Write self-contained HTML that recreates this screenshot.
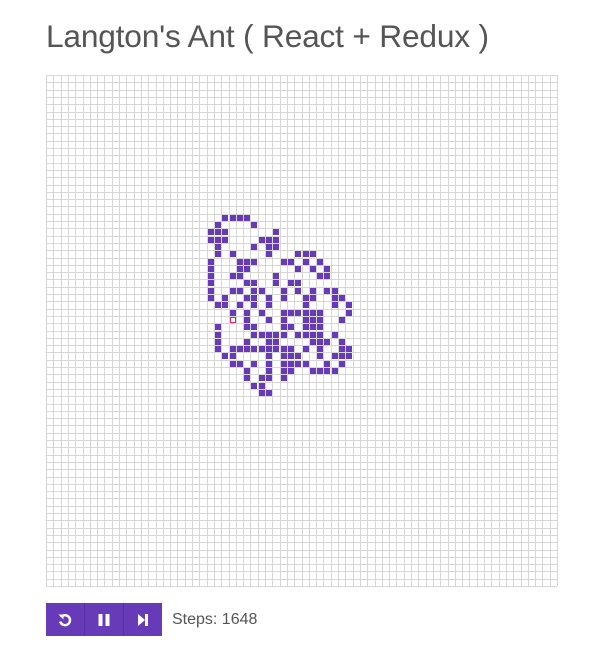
<!DOCTYPE html>
<html><head><meta charset="utf-8"><style>
html,body{margin:0;padding:0;background:#fff;width:600px;height:660px;overflow:hidden}
body{font-family:"Liberation Sans",sans-serif;color:#555}
h1{position:absolute;left:46px;top:16px;margin:0;font-weight:normal;font-size:31.7px;line-height:40px;color:#555;letter-spacing:-0.2px;white-space:nowrap}
#g{position:absolute;left:46px;top:75px}
.btns{position:absolute;left:46px;top:603px;height:33px;display:flex}
.b{width:38px;height:33px;background:#673ab7;border-right:1px solid #5a2ea6;display:flex;align-items:center;justify-content:center}
.b:last-child{border-right:none}
.steps{position:absolute;left:172px;top:611px;font-size:16px;color:#555}
</style></head><body>
<h1>Langton's Ant ( React + Redux )</h1>
<svg id="g" width="512" height="512" xmlns="http://www.w3.org/2000/svg"></svg>
<div class="btns">
<div class="b"><svg width="16" height="16" viewBox="0 0 16 16"><path d="M4 5.2A5 5 0 1 1 3.2 9.5" fill="none" stroke="#fff" stroke-width="2.4"/><path d="M1.5 2.5L6.5 2.5L6.5 7.5Z" fill="#fff"/></svg></div>
<div class="b"><svg width="16" height="16" viewBox="0 0 16 16"><rect x="2.5" y="2" width="4" height="12" fill="#fff"/><rect x="9.5" y="2" width="4" height="12" fill="#fff"/></svg></div>
<div class="b"><svg width="16" height="16" viewBox="0 0 16 16"><path d="M3 2L10 8L3 14Z" fill="#fff"/><rect x="10" y="2" width="3" height="12" fill="#fff"/></svg></div>
</div>
<div class="steps">Steps: 1648</div>
<script>
var rows={1:[2,3,4,5],2:[1,6],3:[0,1,2,9],4:[0,1,2,7,8,9],5:[1,6,8,9],6:[1,3,8,12,13,14],
7:[0,4,5,6,10,11,13,15],8:[0,4,5,12,14,16],9:[0,3,4,9,15,16],10:[0,5,6,9,11,12],
11:[0,3,4,6,7,10,12,14,16,17],12:[0,2,5,6,8,10,13,14,17,18],13:[1,2,4,6,8,13,17,19],
14:[3,5,7,10,11,12,13,14,15,19],15:[5,8,10,13,14,15,18],16:[1,5,6,10,11,13,14,15],
17:[1,6,7,8,9,10,12,13,14,15,17],18:[1,5,8,9,14,15,16,18],19:[1,3,4,5,6,7,8,9,10,11,13,15,18,19],
20:[2,3,8,10,11,12,15,17,18,19],21:[3,4,6,8,10,11,12,13,16,18],22:[5,8,10,11,14,15,16,17],
23:[5,7,8,10],24:[6,7],25:[7,8]};
var P=7.3,N=70,W=511,s='<rect width="512" height="512" fill="#fff"/>';
for(var i=0;i<=N;i++){var v=Math.round(i*P)+0.5;s+='<line x1="'+v+'" y1="0" x2="'+v+'" y2="'+W+'" stroke="#d6d6d6"/><line x1="0" y1="'+v+'" x2="'+W+'" y2="'+v+'" stroke="#d6d6d6"/>';}
for(var r in rows){rows[r].forEach(function(c){var x=Math.round((c+22)*P)+1,y=Math.round((+r+18)*P)+1;s+='<rect x="'+x+'" y="'+y+'" width="6" height="6" fill="#673ab7"/>';});}
var ax=Math.round(25*P)+1,ay=Math.round(33*P)+1;
s+='<rect x="'+(ax+0.5)+'" y="'+(ay+0.5)+'" width="5" height="5" fill="#fff" stroke="#e91e63"/>';
document.getElementById('g').innerHTML=s;
</script>
</body></html>
